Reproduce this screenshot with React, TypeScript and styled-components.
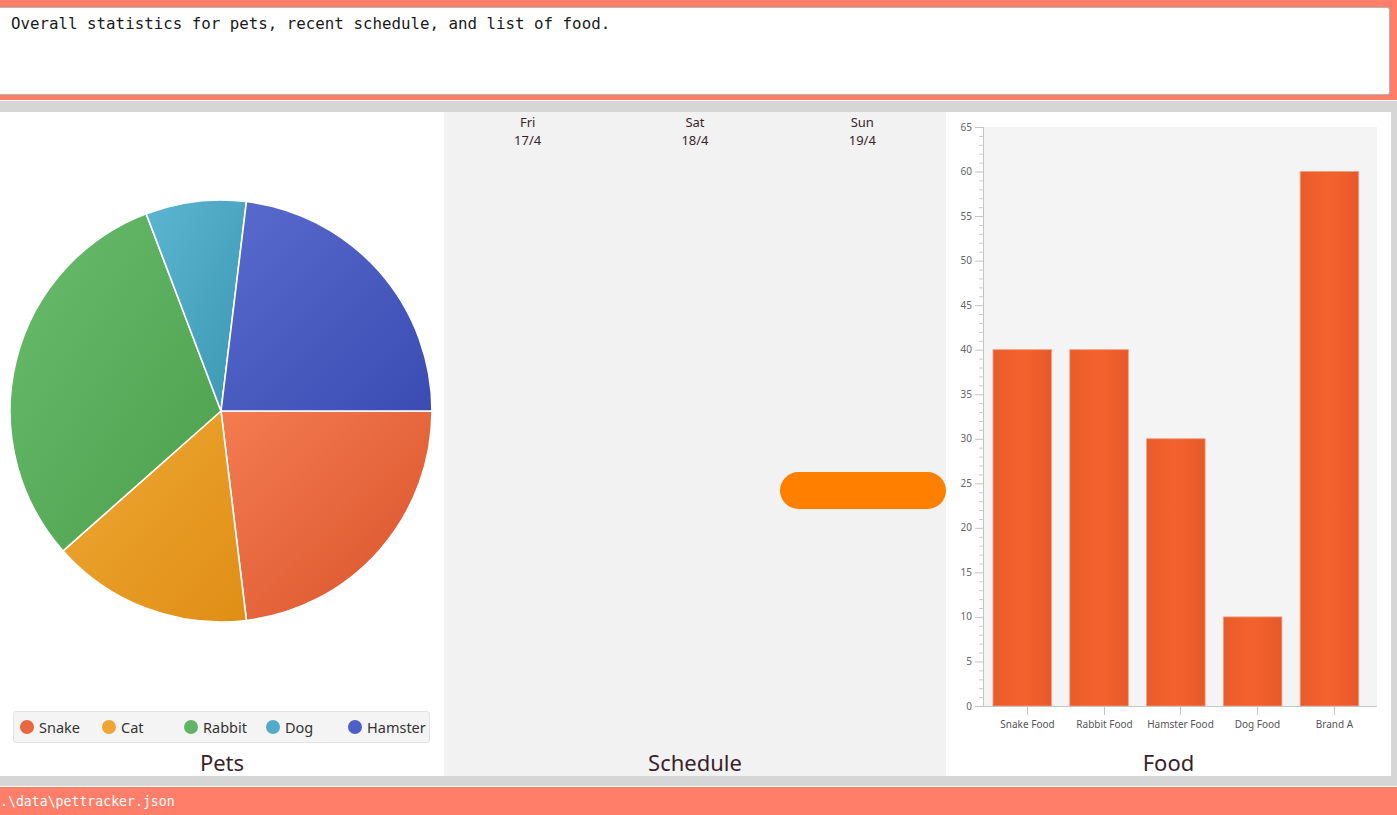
import React from "react";
import styled, { createGlobalStyle } from "styled-components";

const SALMON = "#fe7e69";
const INK = "#3b1f2b";

const GlobalStyle = createGlobalStyle`
  html, body {
    margin: 0;
    padding: 0;
    overflow: hidden;
    background: #d6d6d6;
  }
  * {
    box-sizing: border-box;
  }
`;

const Page = styled.div`
  display: flex;
  flex-direction: column;
  width: 1397px;
  height: 815px;
  font-family: "Noto Sans", "Open Sans", sans-serif;
`;

const HeaderBar = styled.header`
  background: ${SALMON};
  padding: 7px 7px 5px 0;
  border-bottom: 1px solid #ffffff;
`;

const DescriptionBox = styled.div`
  height: 88px;
  background: #ffffff;
  border: 1px solid #b5b5b5;
  border-left: none;
  border-radius: 0 3px 3px 0;
  padding: 5px 11px;
  font-family: "DejaVu Sans Mono", "Liberation Mono", monospace;
  font-size: 15.8px;
  line-height: 22px;
  color: #1a1a1a;
`;

const Main = styled.main`
  display: flex;
  height: 686px;
  padding: 11px 6px 10px 0;
  background: #d6d6d6;
  border-bottom: 1px solid #ffffff;
`;

const Panel = styled.section<{ $width: number; $bg: string }>`
  display: flex;
  flex-direction: column;
  width: ${(p) => p.$width}px;
  height: 664px;
  background: ${(p) => p.$bg};
`;

const PanelTitle = styled.div`
  height: 33px;
  padding-top: 4px;
  display: flex;
  align-items: center;
  justify-content: center;
  font-size: 22px;
  color: ${INK};
`;

const Legend = styled.div`
  display: grid;
  grid-template-columns: repeat(5, 82px);
  align-items: center;
  width: 417px;
  height: 32px;
  margin: 1px 0 0 13px;
  padding-left: 6px;
  background: #f4f4f4;
  border: 1px solid #e2e2e2;
  border-radius: 3px;
`;

const LegendItem = styled.div`
  display: flex;
  align-items: center;
  gap: 5px;
  font-size: 14.5px;
  color: #333333;
`;

const LegendDot = styled.span<{ $color: string }>`
  width: 14px;
  height: 14px;
  border-radius: 50%;
  background: ${(p) => p.$color};
`;

const ScheduleGrid = styled.div`
  flex: 1;
  display: grid;
  grid-template-columns: repeat(3, 1fr);
`;

const DayColumn = styled.div`
  display: flex;
  flex-direction: column;
`;

const DayHeader = styled.div`
  padding-top: 1px;
  text-align: center;
  font-size: 13px;
  line-height: 18px;
  color: ${INK};
`;

const DayTrack = styled.div`
  position: relative;
  flex: 1;
`;

const EventPill = styled.div<{ $top: number; $height: number }>`
  position: absolute;
  top: ${(p) => p.$top}px;
  left: 1px;
  right: 0;
  height: ${(p) => p.$height}px;
  border-radius: ${(p) => p.$height / 2}px;
  background: #ff8000;
`;

const StatusBar = styled.footer`
  flex: 1;
  display: flex;
  align-items: center;
  padding-top: 1px;
  background: ${SALMON};
  color: #ffffff;
  font-family: "DejaVu Sans Mono", "Liberation Mono", monospace;
  font-size: 13.2px;
`;

const pets = [
  { name: "Snake", value: 3, light: "#f47b51", dark: "#d9532a", dot: "#e8673f" },
  { name: "Cat", value: 2, light: "#eea935", dark: "#e08e15", dot: "#eda634" },
  { name: "Rabbit", value: 4, light: "#69bc6c", dark: "#4c9f4c", dot: "#62b464" },
  { name: "Dog", value: 1, light: "#5db6d1", dark: "#3a96b1", dot: "#52abc9" },
  { name: "Hamster", value: 3, light: "#5a6bce", dark: "#3a4cb2", dot: "#4f5fc6" },
];

const foods = [
  { name: "Snake Food", value: 40 },
  { name: "Rabbit Food", value: 40 },
  { name: "Hamster Food", value: 30 },
  { name: "Dog Food", value: 10 },
  { name: "Brand A", value: 60 },
];

const days = [
  { day: "Fri", date: "17/4", events: [] as { top: number; height: number }[] },
  { day: "Sat", date: "18/4", events: [] as { top: number; height: number }[] },
  { day: "Sun", date: "19/4", events: [{ top: 323, height: 37 }] },
];

const PieChart: React.FC = () => {
  const cx = 221;
  const cy = 299;
  const r = 211;
  const total = pets.reduce((s, p) => s + p.value, 0);
  let angle = 0;
  const slices = pets.map((p) => {
    const start = angle;
    const sweep = (p.value / total) * Math.PI * 2;
    angle += sweep;
    const x1 = cx + r * Math.cos(start);
    const y1 = cy + r * Math.sin(start);
    const x2 = cx + r * Math.cos(angle);
    const y2 = cy + r * Math.sin(angle);
    const large = sweep > Math.PI ? 1 : 0;
    return {
      ...p,
      d: `M${cx},${cy} L${x1},${y1} A${r},${r} 0 ${large} 1 ${x2},${y2} Z`,
    };
  });
  return (
    <svg width={444} height={598}>
      <defs>
        {slices.map((s) => (
          <linearGradient key={s.name} id={`pie-${s.name}`} x1="0" y1="0" x2="1" y2="1">
            <stop offset="0" stopColor={s.light} />
            <stop offset="1" stopColor={s.dark} />
          </linearGradient>
        ))}
      </defs>
      {slices.map((s) => (
        <path key={s.name} d={s.d} fill={`url(#pie-${s.name})`} stroke="#ffffff" strokeWidth={1.6} strokeLinejoin="round" />
      ))}
    </svg>
  );
};

const BarChart: React.FC = () => {
  const left = 38;
  const right = 431;
  const top = 15;
  const bottom = 594;
  const max = 65;
  const scale = (bottom - top) / max;
  const step = 76.8;
  const barX0 = 47;
  const tickX0 = 80.7;
  const barW = 58.5;
  const majors = Array.from({ length: 14 }, (_, i) => i * 5);
  const minors = Array.from({ length: 66 }, (_, i) => i).filter((v) => v % 5 !== 0);
  const y = (v: number) => bottom - v * scale;
  return (
    <svg width={445} height={631} fontFamily='"Noto Sans", sans-serif'>
      <defs>
        <linearGradient id="bar-fill" x1="0" y1="0" x2="1" y2="0">
          <stop offset="0" stopColor="#e85c2b" />
          <stop offset="0.45" stopColor="#f3622d" />
          <stop offset="0.6" stopColor="#f2612d" />
          <stop offset="1" stopColor="#e5592a" />
        </linearGradient>
      </defs>
      <rect x={left} y={top} width={right - left} height={bottom - top} fill="#f4f4f4" />
      {foods.map((f, i) => (
        <rect
          key={f.name}
          x={barX0 + i * step}
          y={y(f.value)}
          width={barW}
          height={f.value * scale}
          fill="url(#bar-fill)"
          stroke="#f59b7d"
          strokeWidth={0.8}
        />
      ))}
      <line x1={left - 0.5} y1={top} x2={left - 0.5} y2={bottom + 0.5} stroke="#c4c4c4" />
      <line x1={left - 0.5} y1={bottom + 0.5} x2={right} y2={bottom + 0.5} stroke="#c4c4c4" />
      {minors.map((v) => (
        <line key={`m${v}`} x1={33} y1={y(v) + 0.5} x2={left} y2={y(v) + 0.5} stroke="#cccccc" />
      ))}
      {majors.map((v) => (
        <g key={`M${v}`}>
          <line x1={29} y1={y(v) + 0.5} x2={left} y2={y(v) + 0.5} stroke="#c4c4c4" />
          <text x={26} y={y(v) + 3.5} fontSize={10} fill="#666666" textAnchor="end">
            {v}
          </text>
        </g>
      ))}
      {foods.map((f, i) => {
        const cxp = Math.round(tickX0 + step * i) + 0.5;
        return (
          <g key={`x${f.name}`}>
            <line x1={cxp} y1={bottom + 1} x2={cxp} y2={bottom + 9} stroke="#c4c4c4" />
            <text x={cxp} y={616} fontSize={10} fill="#555555" textAnchor="middle">
              {f.name}
            </text>
          </g>
        );
      })}
    </svg>
  );
};

const App: React.FC = () => {
  return (
    <Page>
      <GlobalStyle />
      <HeaderBar>
        <DescriptionBox>Overall statistics for pets, recent schedule, and list of food.</DescriptionBox>
      </HeaderBar>

      <Main>
        <Panel $width={444} $bg="#ffffff">
          <PieChart />
          <Legend>
            {pets.map((p) => (
              <LegendItem key={p.name}>
                <LegendDot $color={p.dot} />
                {p.name}
              </LegendItem>
            ))}
          </Legend>
          <PanelTitle>Pets</PanelTitle>
        </Panel>

        <Panel $width={502} $bg="#f2f2f2">
          <ScheduleGrid>
            {days.map((d) => (
              <DayColumn key={d.day}>
                <DayHeader>
                  {d.day}
                  <br />
                  {d.date}
                </DayHeader>
                <DayTrack>
                  {d.events.map((e, i) => (
                    <EventPill key={i} $top={e.top} $height={e.height} />
                  ))}
                </DayTrack>
              </DayColumn>
            ))}
          </ScheduleGrid>
          <PanelTitle>Schedule</PanelTitle>
        </Panel>

        <Panel $width={445} $bg="#ffffff">
          <BarChart />
          <PanelTitle>Food</PanelTitle>
        </Panel>
      </Main>

      <StatusBar>.\data\pettracker.json</StatusBar>
    </Page>
  );
};

export default App;
